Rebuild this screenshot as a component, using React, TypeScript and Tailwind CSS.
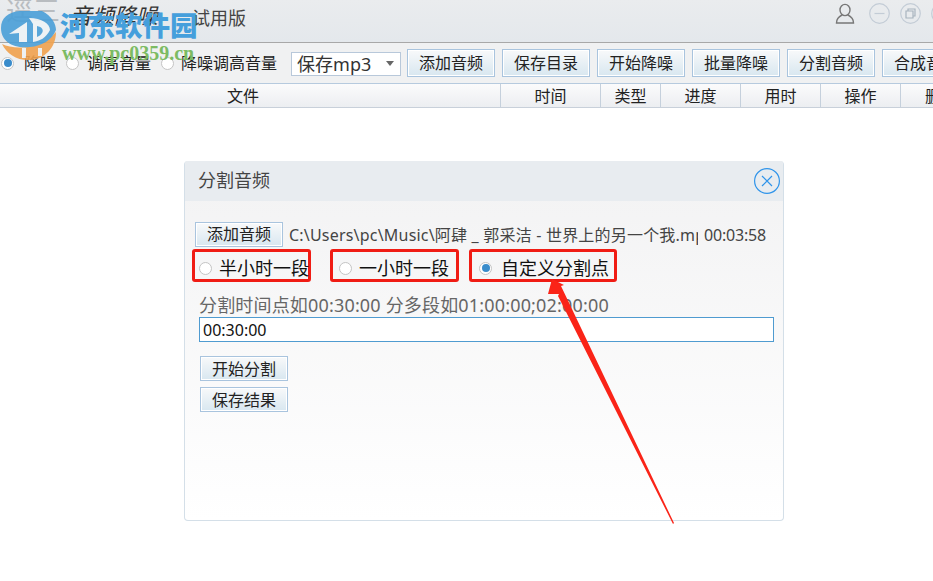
function ToolButton({ label, small = false }: { label: string; small?: boolean }) {
  return (
    <div className={`flex w-[88px] shrink-0 items-center justify-center whitespace-nowrap border border-[#a9c4de] bg-gradient-to-b from-[#f8f9fa] to-[#d8e7f0] text-[16px] leading-none text-[#222] shadow-[inset_0_0_0_1px_#fff] ${small ? "h-[25px]" : "h-[28px]"}`}>
      {label}
    </div>
  )
}

function Radio({ checked = false }: { checked?: boolean }) {
  return (
    <span className="flex h-[13px] w-[13px] shrink-0 items-center justify-center rounded-full border border-[#c4c4c4] bg-white">
      {checked && <span className="h-[8px] w-[8px] rounded-full bg-[#3a8ccb]" />}
    </span>
  )
}

function MarkedOption({ label, className, checked }: { label: string; className: string; checked?: boolean }) {
  return (
    <div className={`flex h-[33px] shrink-0 items-center rounded-[3px] border-[3px] border-[#f01c14] pt-[5px] ${className}`}>
      <Radio checked={checked} />
      <span className="whitespace-nowrap text-[18px] leading-none text-[#111]">{label}</span>
    </div>
  )
}

function Watermark() {
  return (
    <div className="pointer-events-none absolute left-0 top-0 h-[62px] w-[200px]">
      <svg width="58" height="62" viewBox="0 0 58 62" className="absolute left-0 top-0 opacity-90">
        <path d="M2 44 C14 50 40 50 56 32 C56 48 44 59 31 60 C17 61 7 54 2 44Z" fill="#f0a24e" />
        <path d="M22 48 H26 V58 H22 Z M38 48 H42 V56 H38 Z" fill="#eef1f3" />
        <path d="M1 28 C1 18 8 12 20 11 L42 11 C52 16 56 24 56 30 C52 40 42 46 30 47 C14 49 1 42 1 28Z" fill="#4a9fd8" />
        <path d="M9 34 L27 22 L27 42 L19 42 L19 33 Z" fill="#eef3f6" />
        <path d="M29 18 C42 18 50 24 50 30 C46 38 40 41 33 42 L33 24 Z" fill="#eef3f6" />
        <path d="M37 26 C42 27 44 30 42 33 C41 35 39 36 37 37 Z" fill="#4a9fd8" />
      </svg>
      <span className="absolute left-[60px] top-[6px] whitespace-nowrap font-['Noto_Sans_CJK_SC'] text-[27.5px] font-black leading-[36px] text-[#459fdc]">河东软件园</span>
      <span className="absolute left-[62px] top-[43px] whitespace-nowrap font-['Liberation_Serif'] text-[20px] font-bold leading-[20px] text-[#7cbb63]">www.pc0359.cn</span>
    </div>
  )
}

export default function App() {
  return (
    <div className="relative h-[581px] w-[933px] overflow-hidden bg-white font-['Noto_Sans','Noto_Sans_CJK_SC',sans-serif] text-[#222]">
      {/* title bar */}
      <header className="relative flex h-[43px] items-start border-b border-[#a8a8a8] bg-gradient-to-b from-[#eaecee] to-[#e4e8ec]">
        <span className="absolute left-[6px] top-[-7px] whitespace-nowrap text-[27px] leading-[36px] text-[#b8bcc0]">逕三</span>
        <span className="ml-[70px] whitespace-nowrap text-[22px] italic leading-[30px] text-[#333]">音频降噪</span>
        <span className="ml-[34px] mt-[4px] whitespace-nowrap text-[18px] leading-[28px] text-[#444]">试用版</span>
        <div className="ml-auto mr-[-19px] mt-[3px] flex items-center">
          <svg width="20" height="21" viewBox="0 0 20 21" fill="none" stroke="#777" strokeWidth="1.4">
            <ellipse cx="10" cy="7" rx="5" ry="5.6" />
            <path d="M7 12 C3 14 1.5 16 1.5 20 H18.5 C18.5 16 17 14 13 12" />
          </svg>
          <svg width="21" height="21" viewBox="0 0 21 21" fill="none" stroke="#c3ccd6" strokeWidth="1.2" className="ml-[14px]">
            <circle cx="10.5" cy="10.5" r="9.8" />
            <path d="M5.5 10.5 H15.5" />
          </svg>
          <svg width="21" height="21" viewBox="0 0 21 21" fill="none" stroke="#a8b4be" strokeWidth="1.2" className="ml-[10px]">
            <circle cx="10.5" cy="10.5" r="9.8" stroke="#c3ccd6" />
            <path d="M6 8 H13 V15 H6 Z M8 8 V6 H15 V13 H13" />
          </svg>
          <svg width="21" height="21" viewBox="0 0 21 21" fill="none" stroke="#c3ccd6" strokeWidth="1.2" className="ml-[10px]">
            <circle cx="10.5" cy="10.5" r="9.8" />
          </svg>
        </div>
      </header>

      {/* toolbar */}
      <div className="flex h-[40px] items-center whitespace-nowrap bg-[#f0f1f2] pl-[1px] text-[16px] leading-none">
        <Radio checked />
        <span className="ml-[10px] shrink-0">降噪</span>
        <span className="ml-[10px] shrink-0"><Radio /></span>
        <span className="ml-[8px] shrink-0">调高音量</span>
        <span className="ml-[10px] shrink-0"><Radio /></span>
        <span className="ml-[7px] shrink-0">降噪调高音量</span>
        <div className="ml-[14px] mt-[1px] flex h-[24px] w-[110px] shrink-0 items-center justify-between border border-[#b8c8da] bg-white pl-[5px] pr-[6px] text-[18px] text-[#333]">
          <span>保存mp3</span>
          <span className="h-0 w-0 border-x-[4px] border-t-[5px] border-x-transparent border-t-[#666]" />
        </div>
        <div className="ml-[6px] flex shrink-0 gap-[7px]">
          <ToolButton label="添加音频" />
          <ToolButton label="保存目录" />
          <ToolButton label="开始降噪" />
          <ToolButton label="批量降噪" />
          <ToolButton label="分割音频" />
          <ToolButton label="合成音频" />
        </div>
      </div>

      {/* table head */}
      <div className="flex h-[25px] border-y border-t-[#b6cade] border-b-[#c8d0da] bg-gradient-to-b from-[#fbfbfc] to-[#eceef1] text-[16px] leading-[25px] text-[#222]">
        <div className="w-[501px] shrink-0 border-r border-[#c5d0dc] pr-[14px] text-center">文件</div>
        <div className="w-[100px] shrink-0 border-r border-[#c5d0dc] text-center">时间</div>
        <div className="w-[60px] shrink-0 border-r border-[#c5d0dc] text-center">类型</div>
        <div className="w-[80px] shrink-0 border-r border-[#c5d0dc] text-center">进度</div>
        <div className="w-[80px] shrink-0 border-r border-[#c5d0dc] text-center">用时</div>
        <div className="w-[80px] shrink-0 border-r border-[#c5d0dc] text-center">操作</div>
        <div className="w-[80px] shrink-0 text-center">删除</div>
      </div>

      {/* dialog */}
      <section className="ml-[184px] mt-[53px] flex h-[360px] w-[600px] flex-col overflow-hidden rounded-[4px] border-x border-b border-[#d4dfe8] bg-gradient-to-b from-[#f2f2f3] to-white">
        <div className="flex h-[40px] shrink-0 items-center justify-between bg-[#e8ecf0] pl-[13px] pr-[3px]">
          <span className="mt-[-2px] text-[18px] leading-none text-[#444]">分割音频</span>
          <svg width="26" height="26" viewBox="0 0 26 26" fill="none" stroke="#2f94ea" strokeWidth="1.2" className="mt-[-1px]">
            <circle cx="13" cy="13" r="12.4" />
            <path d="M8 8 L18 18 M18 8 L8 18" />
          </svg>
        </div>

        <div className="mt-[21px] flex h-[24px] items-center pl-[10px]">
          <ToolButton label="添加音频" small />
          <span className="ml-[6px] mt-[2px] w-[409px] shrink-0 overflow-hidden whitespace-nowrap text-[16px] leading-[20px] tracking-[0.2px] text-[#444]">
            C:\Users\pc\Music\阿肆 _ 郭采洁 - 世界上的另一个我.mp3
          </span>
          <span className="ml-[6px] mt-[2px] whitespace-nowrap text-[16px] leading-[20px] tracking-[-0.2px] text-[#444]">00:03:58</span>
        </div>

        <div className="mt-[3px] flex pl-[7px]">
          <MarkedOption label="半小时一段" className="w-[119px] gap-[7px] pl-[4px]" />
          <MarkedOption label="一小时一段" className="ml-[19px] w-[129px] gap-[7px] pl-[6px]" />
          <MarkedOption label="自定义分割点" className="ml-[10px] w-[148px] gap-[9px] pl-[7px]" checked />
        </div>

        <p className="ml-[14px] mt-[11px] whitespace-nowrap text-[18px] leading-[24px] tracking-[0.17px] text-[#666]">分割时间点如00:30:00 分多段如01:00:00;02:00:00</p>
        <div className="ml-[14px] flex h-[25px] w-[575px] items-center border border-[#4f9bd0] bg-white pl-[3px] text-[16px] leading-none text-[#111]">00:30:00</div>

        <div className="ml-[15px] mt-[14px] flex flex-col gap-[6px]">
          <ToolButton label="开始分割" small />
          <ToolButton label="保存结果" small />
        </div>
      </section>

      <Watermark />

      {/* annotation arrow */}
      <svg width="933" height="581" viewBox="0 0 933 581" className="pointer-events-none absolute left-0 top-0">
        <path d="M552 279 L564 285 L561 286 L674 523 L673 524 L558 296 L559 294 L548 294 Z" fill="#fa2418" />
      </svg>
    </div>
  )
}
